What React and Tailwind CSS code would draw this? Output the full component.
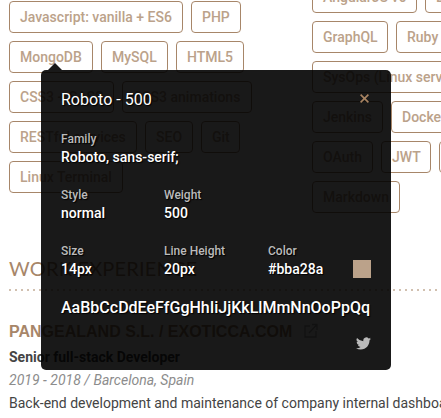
import React from "react";

const leftTags = [
  [["Javascript: vanilla + ES6", 174], ["PHP", 50]],
  [["MongoDB", 84], ["MySQL", 67], ["HTML5", 68]],
  [["CSS3 + SASS", 105], ["CSS3 animations", 130]],
  [["RESTful services", 128], ["SEO", 48], ["Git", 39]],
  [["Linux Terminal", 114]],
];

const rightTags = [
  [["AngularJS v6", 105], ["Laravel", 76]],
  [["GraphQL", 76], ["Ruby on Rails", 110]],
  [["SysOps (Linux servers)", 168]],
  [["Jenkins", 71], ["Docker", 67]],
  [["OAuth", 61], ["JWT", 50], ["Jest", 50]],
  [["Markdown", 88]],
];

function Tags({ rows }) {
  return (
    <div className="flex flex-col gap-2">
      {rows.map((row) => (
        <div key={row[0][0]} className="flex gap-2">
          {row.map(([label, width]) => (
            <span
              key={label}
              style={{ width }}
              className="h-8 shrink-0 whitespace-nowrap rounded border border-[#a78669] pl-[10px] text-sm font-medium leading-[30px] text-[#bba28a]"
            >
              {label}
            </span>
          ))}
        </div>
      ))}
    </div>
  );
}

function Field({ label, value, className = "" }) {
  return (
    <div className={className}>
      <div className="h-[18px] text-xs leading-[18px] text-[#bbb]">{label}</div>
      <div className="h-[18px] text-sm leading-[18px] text-white">{value}</div>
    </div>
  );
}

function FontTooltip() {
  return (
    <div className="absolute left-[41px] top-[63px] w-[350px] font-medium">
      <div className="ml-[7px] h-[7px] w-[14px] bg-black/90 [clip-path:polygon(50%_0,100%_100%,0_100%)]" />
      <div className="h-[300px] rounded-[5px] bg-black/90 px-5 pt-5 [text-shadow:1px_1px_1px_#000]">
        <div className="flex h-10 justify-between">
          <h1 className="text-base font-normal leading-5 text-white">Roboto - 500</h1>
          <svg className="mr-[2px] mt-1 h-[9px] w-[9px]" viewBox="0 0 9 9" fill="none" stroke="#a98462" strokeWidth="1.6">
            <path d="M.6.6 8.4 8.4M8.4.6.6 8.4" />
          </svg>
        </div>
        <Field label="Family" value="Roboto, sans-serif;" className="h-14" />
        <div className="flex h-14">
          <Field label="Style" value="normal" className="w-[103px]" />
          <Field label="Weight" value="500" />
        </div>
        <div className="flex h-14">
          <Field label="Size" value="14px" className="w-[103px]" />
          <Field label="Line Height" value="20px" className="w-[104px]" />
          <Field label="Color" value="#bba28a" className="w-[85px]" />
          <div className="mt-[18px] h-[18px] w-[18px] bg-[#bba28a]" />
        </div>
        <div className="h-10 whitespace-nowrap text-base leading-5 text-white">AaBbCcDdEeFfGgHhIiJjKkLlMmNnOoPpQq</div>
        <svg className="ml-auto mt-[-2px] h-[15px] w-[15px]" viewBox="0 0 24 24" fill="#bbb">
          <path d="M23.95 4.57a10 10 0 0 1-2.82.78 4.96 4.96 0 0 0 2.16-2.73c-.95.56-2 .96-3.13 1.18a4.92 4.92 0 0 0-8.38 4.49A13.94 13.94 0 0 1 1.64 3.16a4.92 4.92 0 0 0 1.52 6.57 4.9 4.9 0 0 1-2.23-.61v.06a4.92 4.92 0 0 0 3.95 4.83 5 5 0 0 1-2.21.08 4.94 4.94 0 0 0 4.6 3.42A9.87 9.87 0 0 1 0 19.54a14 14 0 0 0 7.55 2.21c9.05 0 14-7.5 14-13.98 0-.21 0-.42-.02-.63a9.94 9.94 0 0 0 2.42-2.57z" />
        </svg>
      </div>
    </div>
  );
}

export default function App() {
  return (
    <main className="relative h-[418px] w-[441px] overflow-hidden bg-white font-['Roboto','Liberation_Sans',sans-serif]">
      <div className="flex h-[255px] pl-[9px]">
        <div className="w-[303px] shrink-0 pt-px">
          <Tags rows={leftTags} />
        </div>
        <div className="mt-[-19px]">
          <Tags rows={rightTags} />
        </div>
      </div>
      <section className="pl-[9px]">
        <h2 className="h-[33px] whitespace-nowrap font-['Lato',sans-serif] text-xl leading-[26px] tracking-[0.2px] text-[#a78669]">
          WORK EXPERIENCE
        </h2>
        <svg className="block h-[4px] w-[432px]" viewBox="0 0 432 4">
          <path d="M0 2H432" stroke="#d1c0b0" strokeWidth="2" strokeDasharray="2 4" />
        </svg>
        <h3 className="mt-[29px] flex h-[22px] items-center whitespace-nowrap font-['Liberation_Sans',sans-serif] text-base font-bold leading-5 text-[#a78669]">
          PANGEALAND S.L. / EXOTICCA.COM
          <svg className="mb-[2px] ml-[11px] h-4 w-4 shrink-0" viewBox="0 0 16 16" fill="none" stroke="#a8a8a8" strokeWidth="1.3">
            <path d="M7 3H2v11h11V8M9 1.5h5V7M14 1.5 6 10" />
          </svg>
        </h3>
        <div className="mt-[4px] h-[23px] text-sm font-bold leading-5 text-[#444]">Senior full-stack Developer</div>
        <div className="h-[23px] text-sm italic leading-5 tracking-[0.02px] text-[#8c8c8c]">2019 - 2018 / Barcelona, Spain</div>
        <p className="whitespace-nowrap text-sm leading-5 text-[#444]">
          Back-end development and maintenance of company internal dashboards
        </p>
      </section>
      <FontTooltip />
    </main>
  );
}
